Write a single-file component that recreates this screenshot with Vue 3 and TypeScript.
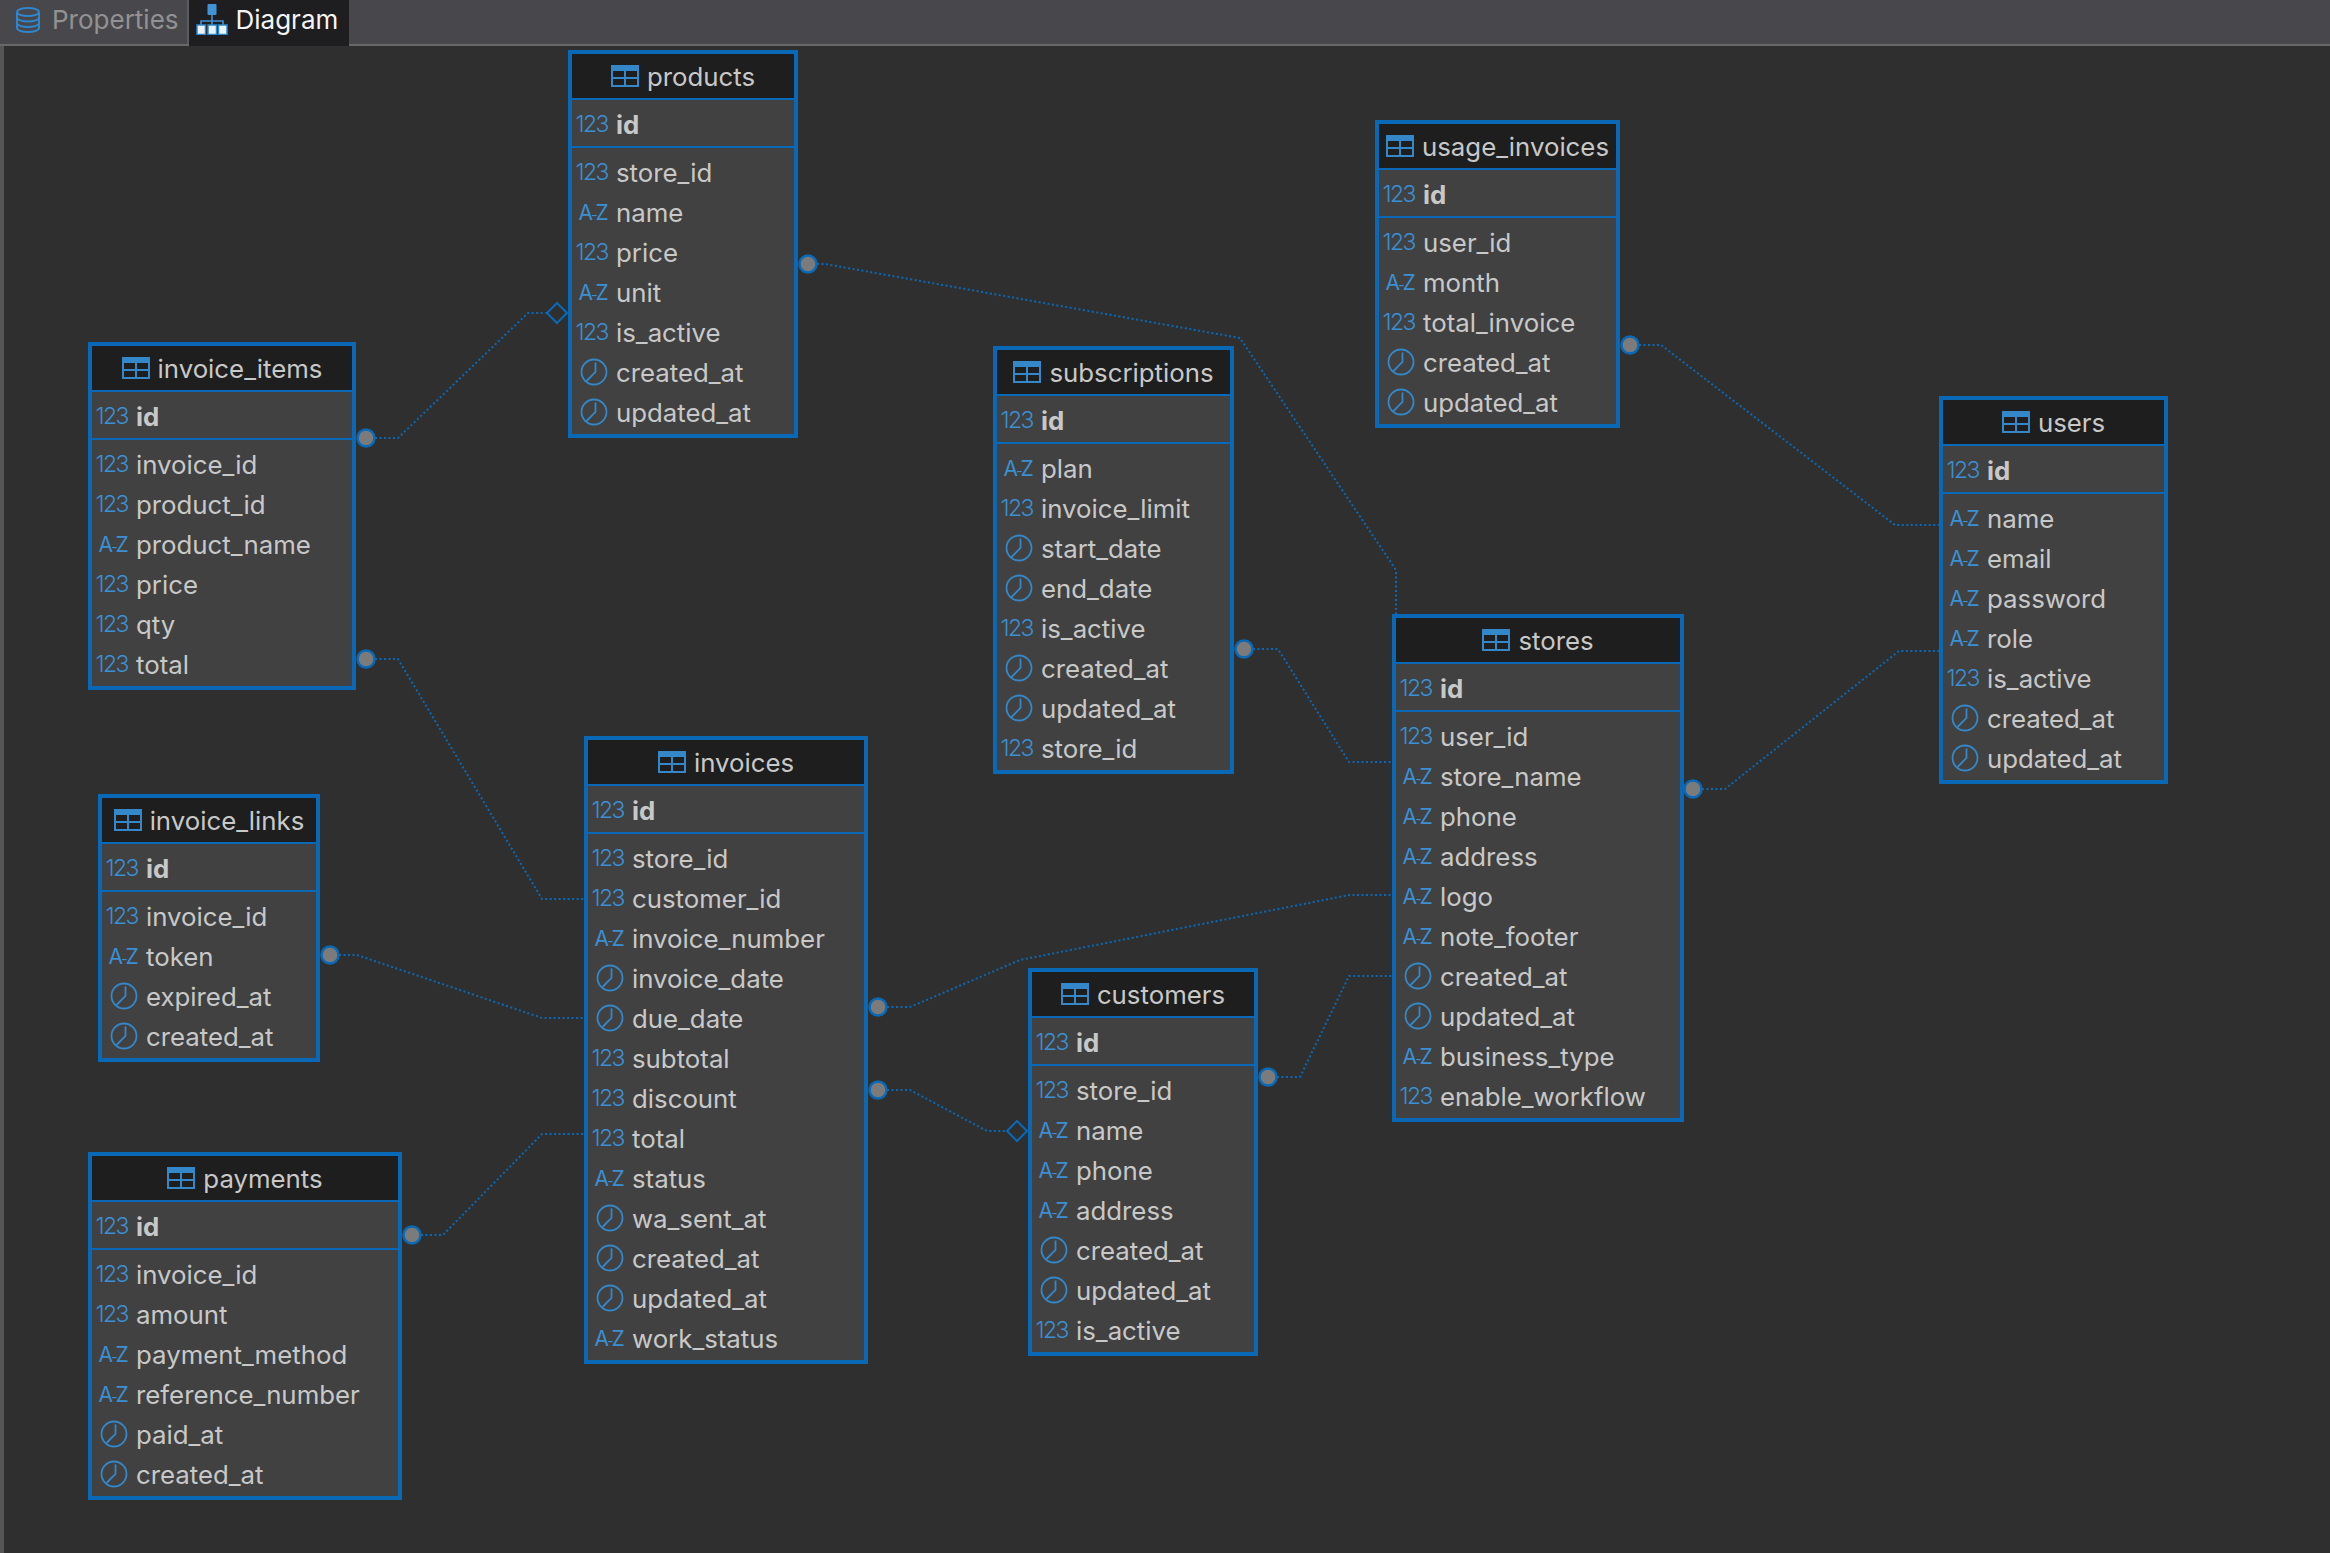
<script setup lang="ts">
type ColType = 'n' | 'a' | 't'

interface Column {
  name: string
  type: ColType
}

interface TableNode {
  name: string
  x: number
  y: number
  w: number
  cols: Column[]
}

// spec string: n:name, a:name, t:name
function cols(spec: string): Column[] {
  return spec.split(' ').map((s) => {
    const [type, name] = s.split(':')
    return { type: type as ColType, name }
  })
}

const tables: TableNode[] = [
  { name: 'products', x: 568, y: 50, w: 230, cols: cols('n:store_id a:name n:price a:unit n:is_active t:created_at t:updated_at') },
  { name: 'usage_invoices', x: 1375, y: 120, w: 245, cols: cols('n:user_id a:month n:total_invoice t:created_at t:updated_at') },
  { name: 'subscriptions', x: 993, y: 346, w: 241, cols: cols('a:plan n:invoice_limit t:start_date t:end_date n:is_active t:created_at t:updated_at n:store_id') },
  { name: 'users', x: 1939, y: 396, w: 229, cols: cols('a:name a:email a:password a:role n:is_active t:created_at t:updated_at') },
  { name: 'stores', x: 1392, y: 614, w: 292, cols: cols('n:user_id a:store_name a:phone a:address a:logo a:note_footer t:created_at t:updated_at a:business_type n:enable_workflow') },
  { name: 'invoice_items', x: 88, y: 342, w: 268, cols: cols('n:invoice_id n:product_id a:product_name n:price n:qty n:total') },
  { name: 'invoices', x: 584, y: 736, w: 284, cols: cols('n:store_id n:customer_id a:invoice_number t:invoice_date t:due_date n:subtotal n:discount n:total a:status t:wa_sent_at t:created_at t:updated_at a:work_status') },
  { name: 'invoice_links', x: 98, y: 794, w: 222, cols: cols('n:invoice_id a:token t:expired_at t:created_at') },
  { name: 'customers', x: 1028, y: 968, w: 230, cols: cols('n:store_id a:name a:phone a:address t:created_at t:updated_at n:is_active') },
  { name: 'payments', x: 88, y: 1152, w: 314, cols: cols('n:invoice_id n:amount a:payment_method a:reference_number t:paid_at t:created_at') },
]

// link routes in page coordinates, first point sits on the dot
const links: number[][][] = [
  [[366, 438], [398, 438], [528, 313], [548, 313]],
  [[366, 659], [398, 659], [542, 899], [584, 899]],
  [[808, 264], [825, 264], [1240, 338], [1396, 570], [1396, 614]],
  [[1244, 649], [1278, 649], [1349, 762], [1392, 762]],
  [[1630, 345], [1661, 345], [1895, 525], [1939, 525]],
  [[1693, 789], [1725, 789], [1899, 651], [1939, 651]],
  [[330, 955], [357, 955], [542, 1018], [584, 1018]],
  [[878, 1007], [910, 1007], [1020, 960], [1349, 895], [1392, 895]],
  [[878, 1090], [910, 1090], [987, 1131], [1008, 1131]],
  [[1268, 1077], [1300, 1077], [1349, 976], [1392, 976]],
  [[412, 1235], [443, 1235], [542, 1134], [584, 1134]],
]

const diamonds: number[][] = [
  [557, 313],
  [1017, 1131],
]

function points(route: number[][]) {
  return route.map((p) => p.join(',')).join(' ')
}

function place(t: TableNode) {
  return { left: `${t.x}px`, top: `${t.y}px`, width: `${t.w}px` }
}
</script>

<template>
  <div class="window">
    <div class="tabbar">
      <div class="tab">
        <svg class="tab-icon" width="24" height="26" viewBox="0 0 24 26" fill="none" stroke="#2f86cc" stroke-width="2">
          <ellipse cx="12" cy="5" rx="11" ry="4" />
          <path d="M1 5v16c0 2.2 5 4 11 4s11-1.800 11-4V5" />
          <path d="M1 10.500c0 2.200 5 4 11 4s11-1.800 11-4M1 16c0 2.200 5 4 11 4s11-1.800 11-4" />
        </svg>
        <span>Properties</span>
      </div>
      <div class="tab active">
        <svg class="tab-icon" width="32" height="31" viewBox="0 0 32 31">
          <rect x="11.500" y="0" width="9" height="11" rx="1" fill="#3f93d6" />
          <path d="M16 11v5M5 21v-4h22v4M16 16v5" fill="none" stroke="#3f93d6" stroke-width="1.600" />
          <g fill="#eaf3fa" stroke="#2f86cc" stroke-width="1.500">
            <rect x="1" y="21" width="8.500" height="9.500" />
            <rect x="12" y="21" width="8.500" height="9.500" />
            <rect x="22.500" y="21" width="8.500" height="9.500" />
          </g>
        </svg>
        <span>Diagram</span>
      </div>
    </div>

    <div class="canvas">
      <svg class="links" width="2330" height="1553" viewBox="0 46 2330 1553">
        <polyline v-for="(route, i) in links" :key="i" :points="points(route)" class="link" />
        <circle v-for="(route, i) in links" :key="'d' + i" :cx="route[0][0]" :cy="route[0][1]" r="8.500" class="dot" />
        <path
          v-for="(d, i) in diamonds"
          :key="'m' + i"
          :d="`M${d[0] - 10} ${d[1]}l10 -10l10 10l-10 10z`"
          class="diamond"
        />
      </svg>

      <div v-for="t in tables" :key="t.name" class="node" :style="place(t)">
        <div class="node-head">
          <svg width="28" height="22" viewBox="0 0 28 22" fill="none" stroke="#3488ca" stroke-width="2">
            <rect x="1" y="1" width="26" height="20" />
            <path d="M1 3.500h26" stroke-width="5" />
            <path d="M1 13h26M14 6v15" />
          </svg>
          <span>{{ t.name }}</span>
        </div>
        <div class="row key">
          <span class="type">123</span>
          <span class="col-name">id</span>
        </div>
        <div class="rows">
          <div v-for="c in t.cols" :key="c.name" class="row">
            <span v-if="c.type === 'n'" class="type">123</span>
            <span v-else-if="c.type === 'a'" class="type alpha">A<i>-</i>Z</span>
            <svg v-else class="clock" width="28" height="28" viewBox="0 0 28 28" fill="none" stroke="#3488ca" stroke-width="1.800">
              <circle cx="14" cy="14" r="12.500" />
              <path d="M15.500 4.500V14L6.500 23" />
            </svg>
            <span class="col-name">{{ c.name }}</span>
          </div>
        </div>
      </div>
    </div>
  </div>
</template>

<style scoped>
.window {
  width: 2330px;
  height: 1553px;
  display: flex;
  flex-direction: column;
  overflow: hidden;
  background: #2f2f2f;
  font-family: Inter, "Liberation Sans", sans-serif;
}

.tabbar {
  height: 46px;
  flex: none;
  display: flex;
  padding-left: 4px;
  box-sizing: border-box;
  background: #48484c;
  border-bottom: 2px solid #686868;
}

.tab {
  display: flex;
  align-items: center;
  gap: 12px;
  height: 44px;
  padding: 0 8px 5px 12px;
  box-sizing: border-box;
  font-size: 26px;
  color: #929292;
  border-right: 2px solid #5c5c5e;
}

.tab.active {
  height: 46px;
  width: 160px;
  box-sizing: border-box;
  padding: 0 0 7px 7px;
  gap: 8px;
  color: #f4f4f4;
  background: #1e1e20;
  border-right: none;
}

.tab-icon {
  flex: none;
}

.canvas {
  position: relative;
  flex: 1;
  border-left: 4px solid #565656;
}

.links {
  position: absolute;
  left: -4px;
  top: 0;
}

.link {
  fill: none;
  stroke: #0a69b7;
  stroke-width: 2;
  stroke-dasharray: 2 2.500;
}

.dot {
  fill: #7b7b7b;
  stroke: #0a69b7;
  stroke-width: 2.500;
}

.diamond {
  fill: none;
  stroke: #0a69b7;
  stroke-width: 2;
}

.node {
  position: absolute;
  margin-left: -4px;
  margin-top: -46px;
  box-sizing: border-box;
  border: 4px solid #0a69b7;
  background: #414141;
  color: #c8c8c8;
  font-size: 25.800px;
}

.node-head {
  height: 44px;
  display: flex;
  align-items: center;
  justify-content: center;
  gap: 8px;
  background: #1e1e1e;
  border-bottom: 2px solid #0a69b7;
}

.row {
  height: 40px;
  display: flex;
  align-items: center;
  white-space: nowrap;
}

.row.key {
  height: 48px;
  padding-top: 2px;
  box-sizing: border-box;
  border-bottom: 2px solid #0a69b7;
  font-weight: 700;
}

.rows {
  padding: 4px 0 2px;
}

.type {
  width: 36px;
  flex: none;
  text-align: right;
  font-size: 23px;
  font-weight: 300;
  letter-spacing: -1.500px;
  color: #3b8fd2;
}

.type.alpha {
  letter-spacing: -0.800px;
  font-size: 21px;
  font-weight: 400;
}

.type.alpha i {
  font-style: normal;
  font-size: 14px;
  margin: 0 -1.200px;
}

.clock {
  flex: none;
  margin-left: 8px;
}

.col-name {
  margin-left: 8px;
}
</style>
